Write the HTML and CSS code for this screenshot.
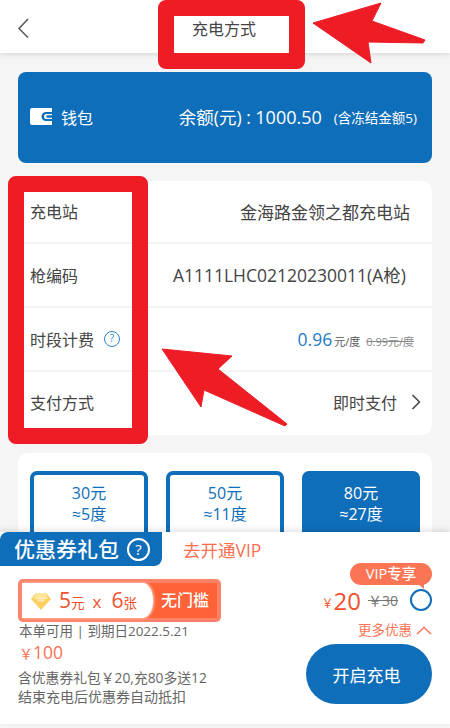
FILE: index.html
```html
<!DOCTYPE html>
<html lang="zh-CN">
<head>
<meta charset="utf-8">
<title>充电方式</title>
<link rel="stylesheet" href="styles.css">
</head>
<body>
<div class="page">
  <header class="nav">
    <svg class="back" viewBox="0 0 14 22"><path d="M12 2 3 11.500 12 20.500"/></svg>
    <span class="nav-title">充电方式</span>
  </header>
  <main class="content">
    <section class="wallet">
      <svg class="wallet-icon" viewBox="0 0 22 17"><path d="M2 0h20v4h-6a4.500 4.500 0 0 0 0 9h6v4H2a2 2 0 0 1-2-2V2a2 2 0 0 1 2-2z"/><path d="M22 6h-5.500a2.500 2.500 0 0 0 0 5H22V9.700h-4.500a1.200 1.200 0 0 1 0-2.400H22z"/></svg>
      <span class="wallet-name">钱包</span>
      <span class="balance">余额(元) : <span class="balance-num">1000.50</span></span>
      <span class="frozen">(含冻结金额5)</span>
    </section>
    <section class="info">
      <div class="row"><span class="label">充电站</span><span class="value">金海路金领之都充电站</span></div>
      <div class="row"><span class="label">枪编码</span><span class="value value-code">A1111LHC02120230011(A枪)</span></div>
      <div class="row">
        <span class="label">时段计费</span>
        <span class="help">?</span>
        <span class="price"><span class="price-num">0.96</span><span class="price-unit">元/度</span><s class="price-old">0.99元/度</s></span>
      </div>
      <div class="row">
        <span class="label">支付方式</span>
        <span class="value value-pay">即时支付</span>
        <svg class="chev" viewBox="0 0 10 16"><path d="M1.500 1 8.500 8 1.500 15"/></svg>
      </div>
    </section>
    <section class="amounts">
      <div class="tile"><span>30元</span><span>≈5度</span></div>
      <div class="tile"><span>50元</span><span>≈11度</span></div>
      <div class="tile tile-on"><span>80元</span><span>≈27度</span></div>
    </section>
  </main>

  <section class="panel">
    <div class="tabs">
      <div class="tab">优惠券礼包<span class="tab-help">?</span></div>
      <span class="open-vip">去开通VIP</span>
    </div>
    <div class="panel-body">
      <div class="left">
        <div class="coupon">
          <div class="coupon-main">
            <svg class="gem" viewBox="0 0 20 18"><path d="M5 1h10l5 6-10 11L0 7z" fill="#fbd05f"/><path d="M5 1h10l2 6H3z" fill="#fde59a"/><text x="10" y="10" text-anchor="middle" class="gem-text">VIP</text></svg>
            <span class="c-num">5</span><span class="c-unit">元</span>
            <span class="c-x">x</span>
            <span class="c-num">6</span><span class="c-unit">张</span>
          </div>
          <div class="coupon-tag">无门槛</div>
        </div>
        <p class="line">本单可用 | 到期日2022.5.21</p>
        <p class="value-100"><span class="y">￥</span>100</p>
        <p class="line line-gift">含优惠券礼包￥20,充80多送12</p>
        <p class="line line-end">结束充电后优惠券自动抵扣</p>
      </div>
      <div class="right">
        <span class="vip-bubble">VIP专享</span>
        <div class="deal">
          <span class="deal-y">￥</span><span class="deal-num">20</span>
          <s class="deal-old">￥30</s>
          <span class="radio"></span>
        </div>
        <div class="more">更多优惠<svg class="up" viewBox="0 0 16 9"><path d="M1 8 8 1.500 15 8"/></svg></div>
        <button class="start">开启充电</button>
      </div>
    </div>
  </section>

  <div class="frame frame-title"></div>
  <div class="frame frame-labels"></div>
  <svg class="arrows" viewBox="0 0 450 728">
    <path d="M313 23 381 3 372 21 425 40 423 43 368 42 371 63z"/>
    <path d="M162 349 232 356 218 369 287 424 285 426 204 390 201 407z"/>
  </svg>
</div>
</body>
</html>
```

FILE: styles.css
```css
* { box-sizing: border-box; }
html, body { margin: 0; padding: 0; }
body {
  width: 450px;
  height: 728px;
  overflow: hidden;
  background: #f5f5f5;
  font-family: "Open Sans", "Noto Sans CJK SC", sans-serif;
  color: #444;
}
p { margin: 0; }
.page { position: relative; width: 450px; height: 728px; overflow: hidden; }

.nav {
  position: relative;
  height: 53px;
  background: #fff;
  box-shadow: 0 1px 6px rgba(0, 0, 0, .14);
  display: flex;
  align-items: flex-start;
}
.back { width: 14px; height: 22px; margin: 17px 0 0 16px; fill: none; stroke: #555; stroke-width: 1.500; }
.nav-title { margin: 18px 0 0 162px; font-size: 16px; line-height: 23px; color: #444; }

.content { padding: 19px 18px 0; }
.wallet {
  height: 91px;
  background: #0f6eb9;
  border-radius: 8px;
  color: #fff;
  display: flex;
  align-items: center;
  padding: 0 15px 2px 12px;
}
.wallet-icon { width: 22px; height: 17px; fill: #fff; margin-right: 9px; }
.wallet-name { font-size: 16px; }
.balance { margin-left: auto; font-size: 17.500px; }
.balance-num { font-size: 18px; }
.frozen { margin-left: 12px; font-size: 13.500px; }

.info {
  margin-top: 18px;
  height: 254px;
  background: #fff;
  border-radius: 10px;
  display: flex;
  flex-direction: column;
}
.row {
  height: 64px;
  display: flex;
  align-items: center;
  padding: 0 22px 1px 12px;
  border-bottom: 2px solid #f3f3f3;
  font-size: 16px;
}
.row:first-child { height: 63px; }
.row:last-child { height: 63px; border-bottom: 0; padding-right: 11px; padding-bottom: 4px; }
.label { color: #444; }
.value { margin-left: auto; font-size: 17px; color: #444; }
.value-code { font-size: 17.500px; margin-right: 4px; white-space: nowrap; }
.value-pay { margin-right: 14px; font-size: 16px; }
.help {
  width: 16px;
  height: 16px;
  margin-left: 10px;
  border: 1.500px solid #2a86cc;
  border-radius: 50%;
  color: #2a86cc;
  font-size: 10px;
  line-height: 13px;
  text-align: center;
}
.price { margin-left: auto; margin-right: -4px; display: flex; align-items: baseline; }
.price-num { font-size: 17.500px; color: #1f7cc4; }
.price-unit { margin-left: 2px; font-size: 11px; color: #555; }
.price-old { margin-left: 6px; font-size: 11px; color: #888; }
.chev { width: 10px; height: 16px; fill: none; stroke: #444; stroke-width: 1.500; }

.amounts {
  margin-top: 18px;
  height: 120px;
  background: #fff;
  border-radius: 10px;
  padding: 18px 12px;
  display: grid;
  grid-template-columns: repeat(3, 118px);
  justify-content: space-between;
}
.tile {
  height: 80px;
  border: 4px solid #0f6eb9;
  border-radius: 7px;
  color: #0f6eb9;
  display: flex;
  flex-direction: column;
  align-items: center;
  padding-top: 8px;
  font-size: 16px;
  line-height: 21px;
}
.tile-on { background: #0f6eb9; color: #fff; }

.panel {
  position: absolute;
  left: 0;
  top: 532px;
  width: 450px;
  height: 192px;
  background: #fff;
  box-shadow: 0 -2px 6px rgba(0, 0, 0, .12);
}
.tabs { display: flex; align-items: center; height: 34px; }
.tab {
  width: 162px;
  height: 34px;
  background: #0f6eb9;
  border-radius: 8px 0 8px 0;
  color: #fff;
  font-size: 21px;
  font-weight: 500;
  line-height: 34px;
  padding-left: 14px;
  display: flex;
  align-items: center;
  white-space: nowrap;
}
.tab-help {
  flex: none;
  width: 23px;
  height: 23px;
  margin-left: 8px;
  border: 2px solid #fff;
  border-radius: 50%;
  font-size: 15px;
  line-height: 19px;
  text-align: center;
}
.open-vip { margin-left: 21px; font-size: 17.500px; color: #fb6f50; }

.panel-body { display: flex; justify-content: space-between; padding: 13px 18px 0; }
.left { width: 210px; }
.coupon {
  width: 203px;
  height: 43px;
  border: 4px solid #fe8268;
  border-radius: 5px;
  display: flex;
  background: #ff6237;
}
.coupon-main {
  width: 131px;
  flex: none;
  background: #fff;
  border-radius: 0 10px 10px 0 / 0 50% 50% 0;
  box-shadow: 1px 0 3px rgba(255, 255, 255, .7);
  display: flex;
  align-items: baseline;
  padding-left: 9px;
  color: #f1512d;
  line-height: 35px;
}
.gem { width: 20px; height: 18px; align-self: center; margin-right: 8px; }
.gem-text { font-size: 5px; fill: #fff; font-family: "Liberation Sans", sans-serif; }
.c-num { font-size: 21px; }
.c-unit { font-size: 13.500px; }
.c-x { font-size: 17px; margin: 0 10px 0 8px; }
.coupon-tag {
  flex: 1;
  color: #fff;
  font-size: 16px;
  font-weight: 500;
  line-height: 35px;
  text-align: center;
  white-space: nowrap;
}
.line { font-size: 13.500px; line-height: 19px; color: #666; white-space: nowrap; margin-left: 1px; }
.line-gift { margin-top: 3px; font-size: 13.800px; margin-left: 0; }
.line-end { font-size: 14px; margin-left: 0; }
.value-100 { font-size: 17.500px; line-height: 22px; color: #fb6f50; margin-left: 1px; }
.y { font-size: 14px; }

.right { display: flex; flex-direction: column; align-items: flex-end; margin-top: -16px; }
.vip-bubble {
  position: relative;
  width: 82px;
  height: 22px;
  background: #fb7554;
  border-radius: 11px;
  color: #fff;
  font-size: 14.500px;
  font-weight: 500;
  line-height: 22px;
  text-align: center;
}
.vip-bubble::after {
  content: "";
  position: absolute;
  right: 8px;
  bottom: -4px;
  border-left: 6px solid transparent;
  border-top: 5px solid #fb7554;
}
.deal { display: flex; align-items: center; height: 26px; margin-top: 2px; }
.deal-y { font-size: 12px; color: #f1512d; margin-top: 5px; }
.deal-num { font-size: 24px; color: #f1512d; }
.deal-old { margin-left: 7px; font-size: 14px; color: #777; }
.radio { width: 22px; height: 22px; margin-left: 12px; border: 2px solid #0f6eb9; border-radius: 50%; }
.more { display: flex; align-items: center; margin-top: 7px; font-size: 13.500px; color: #fb7554; line-height: 20px; }
.up { width: 16px; height: 9px; margin-left: 4px; fill: none; stroke: #fb7554; stroke-width: 1.500; }
.start {
  margin-top: 4px;
  width: 126px;
  height: 60px;
  border: 0;
  border-radius: 30px;
  background: #0f6eb9;
  color: #fff;
  padding: 0 5px 0 0;
  font: 17px "Noto Sans CJK SC", sans-serif;
}

.frame { position: absolute; border: 16px solid #ee1c25; border-radius: 8px; }
.frame-title { left: 158px; top: 0; width: 147px; height: 69px; background: transparent; }
.frame-labels { left: 8px; top: 176px; width: 140px; height: 268px; }
.arrows { position: absolute; left: 0; top: 0; width: 450px; height: 728px; fill: #ee1c25; stroke: #ee1c25; stroke-width: 1; stroke-linejoin: round; pointer-events: none; }
```
